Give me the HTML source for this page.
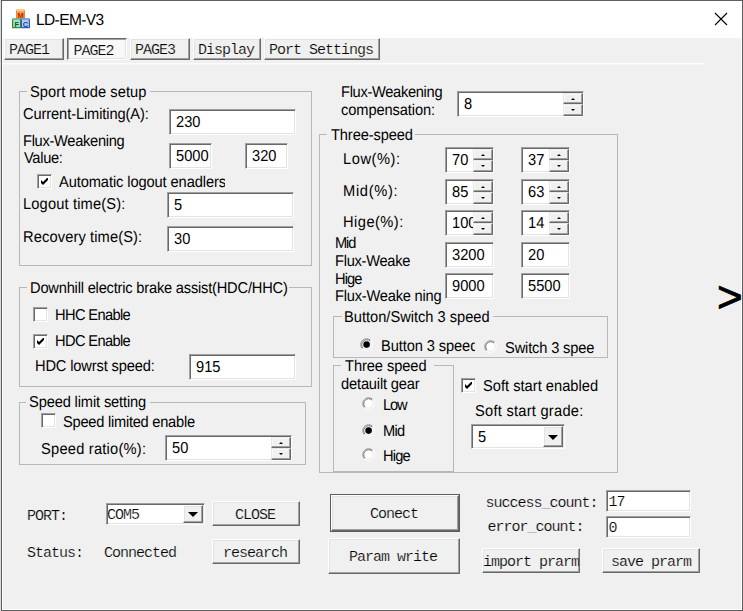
<!DOCTYPE html>
<html><head><meta charset="utf-8"><title>LD-EM-V3</title>
<style>
html,body{margin:0;padding:0}
body{width:743px;height:611px;overflow:hidden;background:#dadada;position:relative;font-family:'Liberation Sans',sans-serif;color:#000}
div,span{box-sizing:border-box}
.abs{position:absolute}
.win{position:absolute;left:1px;top:0;width:742px;height:611px;border:1px solid #5e5e5e;background:#f0f0f0;box-shadow:inset 0 0 0 1px #fff}
.title{position:absolute;left:2px;top:1px;width:740px;height:37px;background:#fff}
.t{position:absolute;white-space:nowrap;font:14.67px/16px 'Liberation Sans',sans-serif;color:#000;transform:scaleY(1.07) skewX(0.03deg);transform-origin:0 13px}
.et{display:inline-block;transform:scaleY(1.08) skewX(0.03deg);transform-origin:0 13px}
.m{position:absolute;white-space:nowrap;font:15px/16px 'Liberation Mono',monospace;letter-spacing:-1px;color:#000;-webkit-text-stroke:0.2px #f0f0f0}
.grp{position:absolute;border:1px solid #b8b8b8}
.lg{position:absolute;background:#f0f0f0;white-space:nowrap;font:14.67px/16px 'Liberation Sans',sans-serif;padding:0 2px}
.ed{position:absolute;background:#fff;border:1px solid;border-color:#a0a0a0 #fff #fff #a0a0a0;box-shadow:inset 1px 1px 0 #696969,inset -1px -1px 0 #e3e3e3;overflow:hidden;white-space:nowrap;font:14.67px/16px 'Liberation Sans',sans-serif;padding:3.7px 0 0 6px}
.ed.mo{font:15px/16px 'Liberation Mono',monospace;letter-spacing:-1px;padding:3px 0 0 2px;-webkit-text-stroke:0.2px #fff}
.btn{position:absolute;background:#f0f0f0;border:1px solid;border-color:#fff #696969 #696969 #fff;box-shadow:inset -1px -1px 0 #a0a0a0,inset 1px 1px 0 #e3e3e3;white-space:nowrap;font:15px/16px 'Liberation Mono',monospace;letter-spacing:-1px;text-align:center;-webkit-text-stroke:0.2px #f0f0f0}
.btn.dn{background:#f8f8f8;-webkit-text-stroke-color:#f8f8f8;border-color:#696969 #fff #fff #696969;box-shadow:inset 1px 1px 0 #a0a0a0,inset -1px -1px 0 #e3e3e3}
.cb{position:absolute;width:15px;height:15px;background:#fff;border:1px solid;border-color:#a0a0a0 #fff #fff #a0a0a0;box-shadow:inset 1px 1px 0 #696969,inset -1px -1px 0 #e3e3e3}
.cb svg{position:absolute;left:3px;top:3px}
.rd{position:absolute;width:12px;height:12px}
.sp{position:absolute;width:20px;background:#f0f0f0}
.sb{position:absolute;left:0;width:20px;background:#f0f0f0;border:1px solid;border-color:#e8e8e8 #696969 #696969 #e8e8e8;box-shadow:inset -1px -1px 0 #a0a0a0,inset 1px 1px 0 #fafafa}
.sb i{position:absolute;left:50%;top:50%;width:0;height:0;border-left:2px solid transparent;border-right:2px solid transparent;margin-left:-2px}
.sb.up i{border-bottom:2px solid #000;margin-top:-1px}
.sb.dnn i{border-top:2px solid #000;margin-top:-1px}
.cbtn{position:absolute;background:#f0f0f0;border:1px solid;border-color:#fff #696969 #696969 #fff;box-shadow:inset -1px -1px 0 #a0a0a0,inset 1px 1px 0 #e3e3e3}
.cbtn i{position:absolute;left:50%;top:50%;width:0;height:0;border-left:5px solid transparent;border-right:5px solid transparent;border-top:5px solid #000;margin-left:-5px;margin-top:-2px}
</style></head>
<body>
<div class="win"></div><div class="title"></div>
<svg class="abs" style="left:12px;top:9px" width="18" height="20" viewBox="0 0 18 20">
<rect x="4" y="0.4" width="9" height="9.4" rx="0.8" fill="#e58a35"/><rect x="4.4" y="0.4" width="8.2" height="2.2" rx="0.8" fill="#f8cf8a"/><rect x="5" y="2.6" width="7" height="6.4" fill="#f2a24e"/>
<rect x="0" y="9.4" width="9.2" height="9.8" rx="0.8" fill="#2e8c4c"/><rect x="0.4" y="9.4" width="8.4" height="1.6" rx="0.8" fill="#6fbf86"/><rect x="1.2" y="11" width="6.8" height="7" fill="#a6e0b4"/>
<rect x="8.8" y="9.4" width="9.2" height="9.8" rx="0.8" fill="#2b5db5"/><rect x="9.2" y="9.4" width="8.4" height="1.6" rx="0.8" fill="#7ea6e0"/><rect x="10" y="11" width="6.8" height="7" fill="#b0cdf4"/>
<text x="8.5" y="8.6" font-family="Liberation Sans, sans-serif" font-size="7.5" font-weight="bold" fill="#c41c00" text-anchor="middle">M</text>
<text x="4.7" y="17.6" font-family="Liberation Sans, sans-serif" font-size="7.5" font-weight="bold" fill="#12592a" text-anchor="middle">F</text>
<text x="13.4" y="17.6" font-family="Liberation Sans, sans-serif" font-size="7.5" font-weight="bold" fill="#1a3c98" text-anchor="middle">C</text>
</svg>
<span id="t1" class="t" style="left:36.00px;top:10.8px;letter-spacing:-0.604px;font-size:15.5px;line-height:17px;transform:scaleY(1.03) skewX(0.03deg);transform-origin:0 14px;">LD-EM-V3</span>
<svg class="abs" style="left:714px;top:12px" width="14" height="14" viewBox="0 0 14 14"><path d="M1 1L13 13M13 1L1 13" stroke="#000" stroke-width="1.1" fill="none"/></svg>
<div class="btn" style="left:4px;top:38px;width:60px;height:22px;padding-top:4px;text-align:left;padding-left:4px;">PAGE1</div>
<div class="btn dn" style="left:67px;top:38px;width:60px;height:22px;padding-top:5px;text-align:left;padding-left:5.5px;">PAGE2</div>
<div class="btn" style="left:130px;top:38px;width:60px;height:22px;padding-top:4px;text-align:left;padding-left:4px;">PAGE3</div>
<div class="btn" style="left:193px;top:38px;width:68px;height:22px;padding-top:4px;text-align:left;padding-left:4px;">Display</div>
<div class="btn" style="left:264px;top:38px;width:116px;height:22px;padding-top:4px;text-align:left;padding-left:4px;">Port Settings</div>
<div class="abs" style="left:3px;top:63px;width:702px;height:1px;background:#fcfcfc"></div><div class="abs" style="left:3px;top:64px;width:702px;height:1px;background:#f6f6f6"></div>
<div class="grp" style="left:19px;top:91px;width:293px;height:175px"></div>
<div class="abs" style="left:27px;top:91px;width:123px;height:1px;background:#f0f0f0"></div>
<span id="t2" class="t" style="left:30.10px;top:83.5px;letter-spacing:0.044px;">Sport mode setup</span>
<div class="grp" style="left:19px;top:287px;width:293px;height:100px"></div>
<div class="abs" style="left:27px;top:287px;width:262px;height:1px;background:#f0f0f0"></div>
<span id="t3" class="t" style="left:29.50px;top:280px;letter-spacing:-0.203px;">Downhill electric brake assist(HDC/HHC)</span>
<div class="grp" style="left:19px;top:402px;width:287px;height:63px"></div>
<div class="abs" style="left:26px;top:402px;width:124px;height:1px;background:#f0f0f0"></div>
<span id="t4" class="t" style="left:29.30px;top:393.9px;letter-spacing:-0.139px;">Speed limit setting</span>
<span id="t5" class="t" style="left:22.90px;top:105.9px;letter-spacing:-0.105px;">Current-Limiting(A):</span>
<span id="t6" class="t" style="left:22.80px;top:132.9px;letter-spacing:-0.298px;">Flux-Weakening</span>
<span id="t7" class="t" style="left:23.50px;top:150.4px;letter-spacing:-0.319px;">Value:</span>
<div class="cb" style="left:37px;top:174px"><svg width="7" height="7" viewBox="0 0 7 7"><path d="M0 2v3l2 2 5-5v-3l-5 5z" fill="#000" transform="translate(0,0)"/></svg></div>
<span id="t8" class="t" style="left:59.30px;top:174px;letter-spacing:-0.100px;width:165.5px;overflow:hidden;">Automatic logout enadlers</span>
<span id="t9" class="t" style="left:22.60px;top:195.8px;letter-spacing:0.155px;">Logout time(S):</span>
<span id="t10" class="t" style="left:22.60px;top:229.2px;letter-spacing:0.119px;">Recovery time(S):</span>
<div class="ed" style="left:169px;top:109px;width:127px;height:26px;"><span class="et">230</span></div>
<div class="ed" style="left:169px;top:143px;width:43px;height:26px;"><span class="et">5000</span></div>
<div class="ed" style="left:245px;top:143px;width:43px;height:26px;"><span class="et">320</span></div>
<div class="ed" style="left:167px;top:192px;width:127px;height:26px;"><span class="et">5</span></div>
<div class="ed" style="left:167px;top:226px;width:127px;height:26px;"><span class="et">30</span></div>
<div class="cb" style="left:33px;top:307px"></div>
<span id="t11" class="t" style="left:54.60px;top:306.5px;letter-spacing:-0.634px;">HHC Enable</span>
<div class="cb" style="left:33px;top:334px"><svg width="7" height="7" viewBox="0 0 7 7"><path d="M0 2v3l2 2 5-5v-3l-5 5z" fill="#000" transform="translate(0,0)"/></svg></div>
<span id="t12" class="t" style="left:54.60px;top:333.25px;letter-spacing:-0.634px;">HDC Enable</span>
<span id="t13" class="t" style="left:34.50px;top:357.5px;letter-spacing:-0.150px;">HDC lowrst speed:</span>
<div class="ed" style="left:189px;top:354px;width:107px;height:26px;"><span class="et">915</span></div>
<div class="cb" style="left:41px;top:413px"></div>
<span id="t14" class="t" style="left:62.70px;top:413.7px;letter-spacing:-0.255px;">Speed limited enable</span>
<span id="t15" class="t" style="left:40.80px;top:441.0px;letter-spacing:0.225px;">Speed ratio(%):</span>
<div class="ed" style="left:165px;top:435px;width:127px;height:26px;"><span class="et">50</span></div>
<div class="sp" style="left:271px;top:437px;height:23px"><div class="sb up" style="top:0;height:11px"><i></i></div><div class="sb dnn" style="top:11px;height:12px"><i></i></div></div>
<span id="t16" class="t" style="left:340.80px;top:84px;letter-spacing:-0.314px;">Flux-Weakening</span>
<span id="t17" class="t" style="left:341.30px;top:101.5px;letter-spacing:-0.096px;">compensation:</span>
<div class="ed" style="left:457px;top:91px;width:127px;height:26px;"><span class="et">8</span></div>
<div class="sp" style="left:563px;top:93px;height:23px"><div class="sb up" style="top:0;height:11px"><i></i></div><div class="sb dnn" style="top:11px;height:12px"><i></i></div></div>
<div class="grp" style="left:319px;top:134px;width:299px;height:339px"></div>
<div class="abs" style="left:327px;top:134px;width:88px;height:1px;background:#f0f0f0"></div>
<span id="t18" class="t" style="left:330.80px;top:126.5px;letter-spacing:-0.115px;">Three-speed</span>
<span id="t19" class="t" style="left:342.90px;top:150.7px;letter-spacing:0.553px;">Low(%):</span>
<span id="t20" class="t" style="left:342.90px;top:182.5px;letter-spacing:0.682px;">Mid(%):</span>
<span id="t21" class="t" style="left:342.90px;top:213.6px;letter-spacing:0.466px;">Hige(%):</span>
<div class="ed" style="left:445px;top:147px;width:49px;height:26px;"><span class="et">70</span></div>
<div class="sp" style="left:473px;top:149px;height:23px"><div class="sb up" style="top:0;height:11px"><i></i></div><div class="sb dnn" style="top:11px;height:12px"><i></i></div></div>
<div class="ed" style="left:521px;top:147px;width:49px;height:26px;"><span class="et">37</span></div>
<div class="sp" style="left:549px;top:149px;height:23px"><div class="sb up" style="top:0;height:11px"><i></i></div><div class="sb dnn" style="top:11px;height:12px"><i></i></div></div>
<div class="ed" style="left:445px;top:179px;width:49px;height:26px;"><span class="et">85</span></div>
<div class="sp" style="left:473px;top:181px;height:23px"><div class="sb up" style="top:0;height:11px"><i></i></div><div class="sb dnn" style="top:11px;height:12px"><i></i></div></div>
<div class="ed" style="left:521px;top:179px;width:49px;height:26px;"><span class="et">63</span></div>
<div class="sp" style="left:549px;top:181px;height:23px"><div class="sb up" style="top:0;height:11px"><i></i></div><div class="sb dnn" style="top:11px;height:12px"><i></i></div></div>
<div class="ed" style="left:445px;top:210px;width:49px;height:26px;"><span class="et">100</span></div>
<div class="sp" style="left:473px;top:212px;height:23px"><div class="sb up" style="top:0;height:11px"><i></i></div><div class="sb dnn" style="top:11px;height:12px"><i></i></div></div>
<div class="ed" style="left:521px;top:210px;width:49px;height:26px;"><span class="et">14</span></div>
<div class="sp" style="left:549px;top:212px;height:23px"><div class="sb up" style="top:0;height:11px"><i></i></div><div class="sb dnn" style="top:11px;height:12px"><i></i></div></div>
<span id="t22" class="t" style="left:335.10px;top:234.8px;letter-spacing:-1.132px;">Mid</span>
<span id="t23" class="t" style="left:335.10px;top:253px;letter-spacing:-0.285px;">Flux-Weake</span>
<span id="t24" class="t" style="left:335.10px;top:271.2px;letter-spacing:-0.931px;">Hige</span>
<span id="t25" class="t" style="left:335.10px;top:287.9px;letter-spacing:-0.225px;">Flux-Weake ning</span>
<div class="ed" style="left:445px;top:242px;width:49px;height:26px;"><span class="et">3200</span></div>
<div class="ed" style="left:521px;top:242px;width:49px;height:26px;"><span class="et">20</span></div>
<div class="ed" style="left:445px;top:273px;width:49px;height:26px;"><span class="et">9000</span></div>
<div class="ed" style="left:521px;top:273px;width:49px;height:26px;"><span class="et">5500</span></div>
<div class="grp" style="left:333px;top:316px;width:275px;height:42px"></div>
<div class="abs" style="left:342px;top:316px;width:151px;height:1px;background:#f0f0f0"></div>
<span id="t26" class="t" style="left:344.40px;top:309.4px;letter-spacing:-0.009px;">Button/Switch 3 speed</span>
<svg class="abs" style="left:360px;top:338px" width="13" height="13" viewBox="0 0 13 13"><circle cx="6.5" cy="6.5" r="6" fill="#fff"/><path d="M2.26 10.74A6 6 0 0 1 10.74 2.26" fill="none" stroke="#a0a0a0" stroke-width="1"/><path d="M2.97 10.03A5 5 0 0 1 10.03 2.97" fill="none" stroke="#696969" stroke-width="1"/><path d="M10.74 2.26A6 6 0 0 1 2.26 10.74" fill="none" stroke="#fff" stroke-width="1"/><path d="M10.03 2.97A5 5 0 0 1 2.97 10.03" fill="none" stroke="#e3e3e3" stroke-width="1"/><circle cx="6.6" cy="6.6" r="3.3" fill="#000"/></svg>
<span id="t27" class="t" style="left:381.00px;top:337.8px;letter-spacing:-0.100px;width:94px;overflow:hidden;">Button 3 speed</span>
<svg class="abs" style="left:484px;top:340px" width="13" height="13" viewBox="0 0 13 13"><circle cx="6.5" cy="6.5" r="6" fill="#fff"/><path d="M2.26 10.74A6 6 0 0 1 10.74 2.26" fill="none" stroke="#a0a0a0" stroke-width="1"/><path d="M2.97 10.03A5 5 0 0 1 10.03 2.97" fill="none" stroke="#696969" stroke-width="1"/><path d="M10.74 2.26A6 6 0 0 1 2.26 10.74" fill="none" stroke="#fff" stroke-width="1"/><path d="M10.03 2.97A5 5 0 0 1 2.97 10.03" fill="none" stroke="#e3e3e3" stroke-width="1"/></svg>
<span id="t28" class="t" style="left:504.50px;top:339.5px;letter-spacing:-0.149px;">Switch 3 spee</span>
<div class="grp" style="left:333px;top:365px;width:121px;height:107px"></div>
<div class="abs" style="left:341px;top:365px;width:93px;height:1px;background:#f0f0f0"></div>
<span id="t29" class="t" style="left:345.00px;top:357.5px;letter-spacing:-0.074px;">Three speed</span>
<span id="t30" class="t" style="left:341.30px;top:375.5px;letter-spacing:-0.165px;">detauilt gear</span>
<svg class="abs" style="left:362px;top:397px" width="13" height="13" viewBox="0 0 13 13"><circle cx="6.5" cy="6.5" r="6" fill="#fff"/><path d="M2.26 10.74A6 6 0 0 1 10.74 2.26" fill="none" stroke="#a0a0a0" stroke-width="1"/><path d="M2.97 10.03A5 5 0 0 1 10.03 2.97" fill="none" stroke="#696969" stroke-width="1"/><path d="M10.74 2.26A6 6 0 0 1 2.26 10.74" fill="none" stroke="#fff" stroke-width="1"/><path d="M10.03 2.97A5 5 0 0 1 2.97 10.03" fill="none" stroke="#e3e3e3" stroke-width="1"/></svg>
<span id="t31" class="t" style="left:382.80px;top:396.5px;letter-spacing:-1.151px;">Low</span>
<svg class="abs" style="left:362px;top:424px" width="13" height="13" viewBox="0 0 13 13"><circle cx="6.5" cy="6.5" r="6" fill="#fff"/><path d="M2.26 10.74A6 6 0 0 1 10.74 2.26" fill="none" stroke="#a0a0a0" stroke-width="1"/><path d="M2.97 10.03A5 5 0 0 1 10.03 2.97" fill="none" stroke="#696969" stroke-width="1"/><path d="M10.74 2.26A6 6 0 0 1 2.26 10.74" fill="none" stroke="#fff" stroke-width="1"/><path d="M10.03 2.97A5 5 0 0 1 2.97 10.03" fill="none" stroke="#e3e3e3" stroke-width="1"/><circle cx="6.6" cy="6.6" r="3.3" fill="#000"/></svg>
<span id="t32" class="t" style="left:382.80px;top:423.3px;letter-spacing:-0.732px;">Mid</span>
<svg class="abs" style="left:362px;top:448px" width="13" height="13" viewBox="0 0 13 13"><circle cx="6.5" cy="6.5" r="6" fill="#fff"/><path d="M2.26 10.74A6 6 0 0 1 10.74 2.26" fill="none" stroke="#a0a0a0" stroke-width="1"/><path d="M2.97 10.03A5 5 0 0 1 10.03 2.97" fill="none" stroke="#696969" stroke-width="1"/><path d="M10.74 2.26A6 6 0 0 1 2.26 10.74" fill="none" stroke="#fff" stroke-width="1"/><path d="M10.03 2.97A5 5 0 0 1 2.97 10.03" fill="none" stroke="#e3e3e3" stroke-width="1"/></svg>
<span id="t33" class="t" style="left:382.80px;top:447.5px;letter-spacing:-0.831px;">Hige</span>
<div class="cb" style="left:461px;top:378px"><svg width="7" height="7" viewBox="0 0 7 7"><path d="M0 2v3l2 2 5-5v-3l-5 5z" fill="#000" transform="translate(0,0)"/></svg></div>
<span id="t34" class="t" style="left:483.30px;top:377.8px;letter-spacing:0.010px;">Soft start enabled</span>
<span id="t35" class="t" style="left:475.00px;top:402.8px;letter-spacing:0.250px;">Soft start grade:</span>
<div class="ed" style="left:471px;top:424px;width:94px;height:25px;"><span class="et">5</span></div>
<div class="cbtn" style="left:543px;top:426px;width:20px;height:21px"><i></i></div>
<span id="t36" class="m" style="left:27.00px;top:509px;">PORT:</span>
<div class="ed mo" style="left:106px;top:503px;width:99px;height:22px;padding:4px 0 0 0;">COM5</div>
<div class="cbtn" style="left:183px;top:505px;width:20px;height:18px"><i></i></div>
<div class="btn" style="left:212px;top:501px;width:88px;height:25px;padding-top:6px;padding-right:2px;">CLOSE</div>
<span id="t37" class="m" style="left:27.00px;top:546px;">Status:</span>
<span id="t38" class="m" style="left:104.00px;top:546px;">Connected</span>
<div class="btn" style="left:212px;top:539px;width:88px;height:25px;padding-top:6px;padding-right:2px;">research</div>
<div class="abs" style="left:330px;top:494px;width:130px;height:38px;border:1px solid #5c5c5c"></div>
<div class="btn" style="left:331px;top:495px;width:128px;height:36px;padding-top:11px;padding-right:2px;">Conect</div>
<div class="btn" style="left:328px;top:538px;width:132px;height:36px;padding-top:11px;padding-right:2px;">Param write</div>
<span id="t39" class="m" style="left:485.50px;top:496px;">success_count:</span>
<span id="t40" class="m" style="left:487.50px;top:520px;">error_count:</span>
<div class="ed mo" style="left:606px;top:490px;width:85px;height:22px;padding:4px 0 0 1.5px;">17</div>
<div class="ed mo" style="left:606px;top:516px;width:85px;height:22px;padding:4px 0 0 1.5px;">0</div>
<div class="btn" style="left:482px;top:548px;width:98px;height:25px;padding-top:6px;">import prarm</div>
<div class="btn" style="left:602px;top:548px;width:98px;height:25px;padding-top:6px;">save prarm</div>
<span class="abs" style="left:717px;top:272px;font:44px/50px 'Liberation Sans',sans-serif;-webkit-text-stroke:0.8px #000;white-space:nowrap">&gt;</span>
</body></html>
